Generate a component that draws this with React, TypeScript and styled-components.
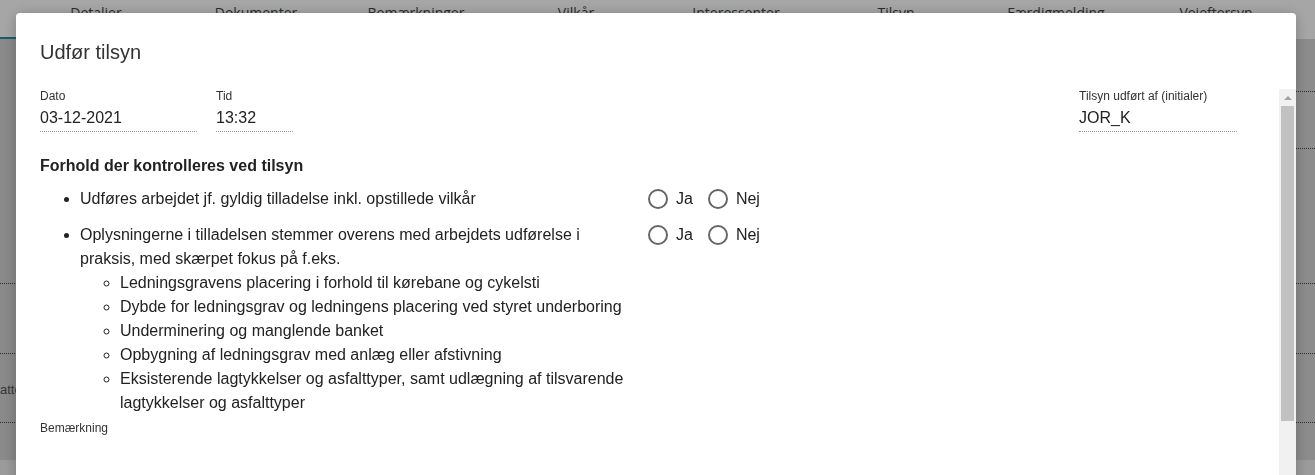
import styled, { createGlobalStyle } from "styled-components";

const GlobalStyle = createGlobalStyle`
  html, body {
    margin: 0;
    padding: 0;
    height: 100%;
    overflow: hidden;
  }
  body {
    font-family: "Liberation Sans", Arial, sans-serif;
    color: #222;
  }
`;

/* ---------- page behind the dialog ---------- */

const Page = styled.div`
  height: 100vh;
  display: flex;
  flex-direction: column;
  background: #dadada;
`;

const TabBar = styled.nav`
  display: grid;
  grid-template-columns: 16px repeat(8, 160px) 1fr;
  height: 39px;
  background: #fff;
`;

const Tab = styled.div<{ $active?: boolean }>`
  padding-top: 4px;
  text-align: center;
  font-family: "Open Sans", sans-serif;
  font-size: 14px;
  line-height: 18px;
  color: #444;
  border-bottom: 2px solid ${({ $active }) => ($active ? "#2a8bb0" : "transparent")};
  box-sizing: border-box;
`;

const PageBody = styled.div`
  flex: 1;
  display: flex;
  flex-direction: column;
  background: linear-gradient(90deg, #d4d4d4 0%, #dcdcdc 50%, #d8d8d8 100%);
`;

const BgRow = styled.div<{ $h: number; $inset?: boolean }>`
  height: ${({ $h }) => $h}px;
  margin-left: ${({ $inset }) => ($inset ? "30px" : "0")};
  border-bottom: 1px dotted #444;
  box-sizing: border-box;
`;

const BgText = styled.div`
  margin-top: 28px;
  font-size: 13px;
  color: #555;
`;

const PageFooter = styled.div`
  height: 15px;
  background: #eee;
`;

const Overlay = styled.div`
  position: fixed;
  inset: 0;
  background: rgba(0, 0, 0, 0.35);
`;

/* ---------- dialog ---------- */

const Modal = styled.section`
  position: fixed;
  top: 13px;
  left: 16px;
  width: 1280px;
  height: 560px;
  background: #fff;
  border-radius: 4px;
  box-shadow: 0 2px 14px rgba(0, 0, 0, 0.25);
  display: flex;
  flex-direction: column;
  overflow: hidden;
`;

const Header = styled.header`
  padding: 24px 24px 6px;
  height: 76px;
  box-sizing: border-box;
`;

const Title = styled.h2`
  margin: 0;
  font-size: 20px;
  font-weight: 400;
  line-height: 30px;
  color: #333;
`;

const Body = styled.div`
  flex: 1;
  min-height: 0;
  display: flex;
`;

const Content = styled.div`
  flex: 1;
  min-width: 0;
  overflow: hidden;
  padding: 0 42px 0 24px;
`;

const ScrollTrack = styled.div`
  width: 17px;
  flex: none;
  background: #f1f1f1;
  display: flex;
  flex-direction: column;
  align-items: center;
`;

const ScrollArrow = styled.div`
  height: 17px;
  width: 17px;
  display: flex;
  align-items: center;
  justify-content: center;

  &::before {
    content: "";
    border-left: 4px solid transparent;
    border-right: 4px solid transparent;
    border-bottom: 4px solid #a3a3a3;
  }
`;

const ScrollThumb = styled.div`
  width: 13px;
  height: 315px;
  background: #c1c1c1;
`;

const Fields = styled.div`
  display: flex;
  gap: 19px;
`;

const Field = styled.div<{ $w: number; $push?: boolean }>`
  width: ${({ $w }) => $w}px;
  margin-left: ${({ $push }) => ($push ? "auto" : "0")};
`;

const Label = styled.div`
  font-size: 12px;
  line-height: 14px;
  color: #333;
`;

const Value = styled.div`
  margin-top: 5px;
  padding-bottom: 3px;
  font-size: 16px;
  line-height: 20px;
  color: #222;
  border-bottom: 1px dotted #999;
`;

const SectionTitle = styled.h3`
  margin: 24px 0 11px;
  font-size: 16px;
  font-weight: 700;
  line-height: 20px;
  color: #222;
`;

const CheckList = styled.ul`
  margin: 0;
  padding-left: 40px;
  list-style: disc;
`;

const CheckItem = styled.li`
  font-size: 16px;
  line-height: 24px;
  & + & {
    margin-top: 12px;
  }
`;

const ItemGrid = styled.div`
  display: grid;
  grid-template-columns: 550px auto;
  column-gap: 18px;
  align-items: start;
`;

const SubList = styled.ul`
  margin: 0;
  padding-left: 40px;
  list-style: circle;
`;

const RadioGroup = styled.div`
  display: flex;
  align-items: center;
  height: 24px;
`;

const RadioOption = styled.label`
  display: flex;
  align-items: center;
  gap: 8px;
  margin-right: 15px;
  font-size: 16px;
  color: #222;
`;

const RadioCircle = styled.span`
  width: 20px;
  height: 20px;
  box-sizing: border-box;
  border: 2px solid #666;
  border-radius: 50%;
`;

const RemarkLabel = styled(Label)`
  margin-top: 6px;
`;

const RemarkInput = styled.div`
  margin-top: 6px;
  height: 110px;
  border-bottom: 1px dotted #999;
`;

function YesNo() {
  return (
    <RadioGroup>
      <RadioOption>
        <RadioCircle />
        Ja
      </RadioOption>
      <RadioOption>
        <RadioCircle />
        Nej
      </RadioOption>
    </RadioGroup>
  );
}

const tabs = [
  "Detaljer",
  "Dokumenter",
  "Bemærkninger",
  "Vilkår",
  "Interessenter",
  "Tilsyn",
  "Færdigmelding",
  "Vejeftersyn",
];

const subPoints = [
  "Ledningsgravens placering i forhold til kørebane og cykelsti",
  "Dybde for ledningsgrav og ledningens placering ved styret underboring",
  "Underminering og manglende banket",
  "Opbygning af ledningsgrav med anlæg eller afstivning",
  "Eksisterende lagtykkelser og asfalttyper, samt udlægning af tilsvarende lagtykkelser og asfalttyper",
];

export default function App() {
  return (
    <>
      <GlobalStyle />
      <Page>
        <TabBar>
          <Tab $active />
          {tabs.map((t) => (
            <Tab key={t}>{t}</Tab>
          ))}
          <Tab />
        </TabBar>
        <PageBody>
          <BgRow $h={53} $inset />
          <BgRow $h={57} $inset />
          <BgRow $h={135} />
          <BgRow $h={70} />
          <BgRow $h={69}>
            <BgText>atte</BgText>
          </BgRow>
        </PageBody>
        <PageFooter />
      </Page>
      <Overlay />
      <Modal role="dialog" aria-label="Udfør tilsyn">
        <Header>
          <Title>Udfør tilsyn</Title>
        </Header>
        <Body>
          <Content>
            <Fields>
              <Field $w={157}>
                <Label>Dato</Label>
                <Value>03-12-2021</Value>
              </Field>
              <Field $w={77}>
                <Label>Tid</Label>
                <Value>13:32</Value>
              </Field>
              <Field $w={158} $push>
                <Label>Tilsyn udført af (initialer)</Label>
                <Value>JOR_K</Value>
              </Field>
            </Fields>
            <SectionTitle>Forhold der kontrolleres ved tilsyn</SectionTitle>
            <CheckList>
              <CheckItem>
                <ItemGrid>
                  <div>Udføres arbejdet jf. gyldig tilladelse inkl. opstillede vilkår</div>
                  <YesNo />
                </ItemGrid>
              </CheckItem>
              <CheckItem>
                <ItemGrid>
                  <div>
                    Oplysningerne i tilladelsen stemmer overens med arbejdets udførelse i praksis,
                    med skærpet fokus på f.eks.
                    <SubList>
                      {subPoints.map((p) => (
                        <li key={p}>{p}</li>
                      ))}
                    </SubList>
                  </div>
                  <YesNo />
                </ItemGrid>
              </CheckItem>
            </CheckList>
            <RemarkLabel>Bemærkning</RemarkLabel>
            <RemarkInput />
          </Content>
          <ScrollTrack aria-hidden>
            <ScrollArrow />
            <ScrollThumb />
          </ScrollTrack>
        </Body>
      </Modal>
    </>
  );
}
